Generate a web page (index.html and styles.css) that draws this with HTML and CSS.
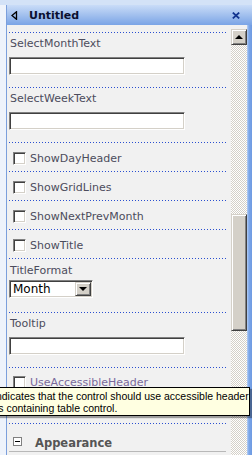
FILE: index.html
```html
<!DOCTYPE html>
<html>
<head>
    <title>Properties</title>
    <link rel="stylesheet" href="styles.css">
</head>
<body>
    <div class="strip"></div>
    <div class="pane">
        <div class="titlebar">
            <svg class="collapse" width="7" height="9" viewBox="0 0 7 9">
                <polygon points="5.5,0.7 1,4.5 5.5,8.3" fill="none" stroke="#000" stroke-width="1.3"/>
            </svg>
            <span class="title">Untitled</span>
            <svg class="close" width="8" height="7" viewBox="0 0 8 7">
                <path d="M0.8 0.6 L7.2 6.4 M7.2 0.6 L0.8 6.4" stroke="#12348f" stroke-width="1.8"/>
            </svg>
        </div>
        <div class="main">
            <div class="props">
                <div class="sep"></div>
                <div class="field">
                    <label>SelectMonthText</label>
                    <input type="text" class="textbox">
                </div>
                <div class="sep"></div>
                <div class="field">
                    <label>SelectWeekText</label>
                    <input type="text" class="textbox">
                </div>
                <div class="sep"></div>
                <div class="check">
                    <input type="checkbox" class="box"><label>ShowDayHeader</label>
                </div>
                <div class="sep"></div>
                <div class="check">
                    <input type="checkbox" class="box"><label>ShowGridLines</label>
                </div>
                <div class="sep"></div>
                <div class="check">
                    <input type="checkbox" class="box"><label>ShowNextPrevMonth</label>
                </div>
                <div class="sep"></div>
                <div class="check">
                    <input type="checkbox" class="box"><label>ShowTitle</label>
                </div>
                <div class="sep"></div>
                <div class="field choice">
                    <label>TitleFormat</label>
                    <div class="combo">
                        <span class="combo-text">Month</span>
                        <span class="combo-btn"></span>
                    </div>
                </div>
                <div class="sep"></div>
                <div class="field">
                    <label>Tooltip</label>
                    <input type="text" class="textbox">
                </div>
                <div class="sep"></div>
                <div class="check tall">
                    <input type="checkbox" class="box"><label class="hover">UseAccessibleHeader</label>
                </div>
                <div class="sep"></div>
                <div class="category">
                    <span class="toggle"></span>
                    <span class="category-name">Appearance</span>
                </div>
            </div>
            <div class="scrollbar">
                <div class="arrow"></div>
                <div class="track">
                    <div class="thumb"></div>
                </div>
            </div>
            <div class="edge"></div>
        </div>
    </div>

    <div class="tooltip">
        <div>Indicates that the control should use accessible header</div>
        <div>its containing table control.</div>
    </div>
</body>
</html>
```

FILE: styles.css
```css
html, body {
    margin: 0;
    height: 455px;
    overflow: hidden;
}
body {
    font-family: "DejaVu Sans", Verdana, sans-serif;
    font-size: 11px;
    background-color: #eef3fb;
}
.strip {
    height: 5px;
    background-color: #d3e2f7;
}
.pane {
    height: 450px;
    margin-left: 6px;
    border-left: 1px solid #7b9fdc;
    display: flex;
    flex-direction: column;
}
.titlebar {
    height: 20px;
    flex: none;
    display: flex;
    align-items: center;
    background: linear-gradient(#c9dcf8, #a6c3ef 45%, #7aa4e6);
}
.collapse {
    margin-left: 4px;
}
.title {
    margin-left: 11px;
    font-weight: bold;
    color: #0a1030;
}
.close {
    margin-left: auto;
    margin-right: 12px;
}
.main {
    flex: 1;
    display: flex;
    background-color: #f1f1f1;
}
.props {
    flex: 1;
    padding: 7px 5px 0 2px;
}
/* dotted row separator: 1px dot, 2px gap */
.sep {
    height: 1px;
    background-image: linear-gradient(to right, #2a4fd0 1px, transparent 1px);
    background-size: 3px 1px;
}
.field, .check, .category {
    box-sizing: border-box;
}
.field {
    height: 54px;
    padding-top: 4px;
}
.field label {
    display: block;
    line-height: 14px;
    padding-left: 1px;
    color: #4c4c5c;
}
.textbox {
    display: block;
    margin: 6px 0 0;
    padding: 0;
    width: 176px;
    height: 18px;
    box-sizing: border-box;
    background-color: #fff;
    border: 1px solid;
    border-color: #808080 #fff #fff #808080;
    box-shadow: inset 1px 1px #404040, inset -1px -1px #d4d0c8;
    outline: none;
}
.choice {
    height: 53px;
    padding-top: 5px;
}
.combo {
    margin-top: 2px;
    width: 84px;
    height: 18px;
    box-sizing: border-box;
    display: flex;
    background-color: #fff;
    border: 1px solid;
    border-color: #808080 #fff #fff #808080;
    box-shadow: inset 1px 1px #404040, inset -1px -1px #d4d0c8;
    padding: 1px;
}
.combo-text {
    flex: 1;
    padding-left: 2px;
    font-size: 12px;
    line-height: 14px;
    color: #000;
}
.combo-btn {
    width: 16px;
    box-sizing: border-box;
    background-color: #d4d0c8;
    border: 1px solid;
    border-color: #d4d0c8 #404040 #404040 #d4d0c8;
    box-shadow: inset 1px 1px #fff, inset -1px -1px #808080;
    display: flex;
    align-items: center;
    justify-content: center;
}
.combo-btn::after {
    content: "";
    border-left: 4px solid transparent;
    border-right: 4px solid transparent;
    border-top: 4px solid #000;
}
.check {
    height: 28px;
    padding: 9px 0 0 4px;
    display: flex;
    align-items: flex-start;
}
.check.tall {
    height: 55px;
    padding-top: 8px;
}
.box {
    appearance: none;
    margin: 0 4px 0 0;
    width: 13px;
    height: 13px;
    flex: none;
    background-color: #fff;
    border: 1px solid;
    border-color: #808080 #fff #fff #808080;
    box-shadow: inset 1px 1px #404040, inset -1px -1px #d4d0c8;
}
.check label {
    line-height: 13px;
    color: #4c4c5c;
}
.check label.hover {
    color: #7a6a9c;
}
.category {
    height: 28px;
    padding: 13px 0 0 4px;
    display: flex;
    align-items: flex-start;
    border-bottom: 1px solid #b8b8b8;
}
.toggle {
    width: 9px;
    height: 9px;
    box-sizing: border-box;
    border: 1px solid #808080;
    background-color: #fff;
    display: flex;
    align-items: center;
    justify-content: center;
}
.toggle::after {
    content: "";
    width: 5px;
    height: 1px;
    background-color: #000;
}
.category-name {
    margin-left: 13px;
    font-size: 11.5px;
    font-weight: bold;
    color: #555;
    line-height: 12px;
}
.scrollbar {
    width: 16px;
    padding-top: 4px;
    display: flex;
    flex-direction: column;
}
.arrow, .thumb {
    box-sizing: border-box;
    background-color: #d4d0c8;
    border: 1px solid;
    border-color: #d4d0c8 #404040 #404040 #d4d0c8;
    box-shadow: inset 1px 1px #fff, inset -1px -1px #808080;
}
.arrow {
    height: 16px;
    display: flex;
    align-items: center;
    justify-content: center;
}
.arrow::after {
    content: "";
    border-left: 4px solid transparent;
    border-right: 4px solid transparent;
    border-bottom: 4px solid #000;
}
.track {
    flex: 1;
    background: repeating-conic-gradient(#fff 0 25%, #d4d0c8 0 50%) 0 0 / 2px 2px;
}
.thumb {
    margin-top: 169px;
    height: 117px;
}
.edge {
    width: 5px;
    background: linear-gradient(to right, #b6cff4, #7ba6e9 40%, #6e9ae1);
}
.tooltip {
    position: absolute;
    left: -10px;
    top: 387px;
    width: 260px;
    box-sizing: border-box;
    padding: 2px 0 1px 2px;
    border: 1px solid #000;
    background-color: #ffffe1;
    box-shadow: 2px 2px 1px rgba(0, 0, 0, 0.35);
    font-family: "Liberation Sans", Arial, sans-serif;
    font-size: 10.5px;
    line-height: 12px;
    color: #000;
    white-space: nowrap;
}
```
